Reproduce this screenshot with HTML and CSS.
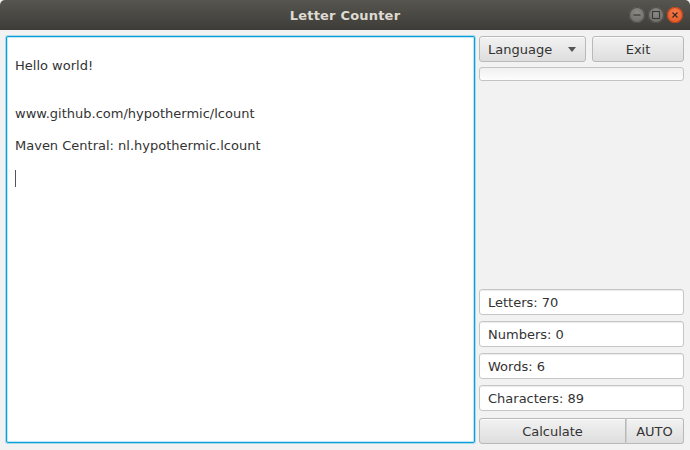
FILE: index.html
```html
<!DOCTYPE html>
<html>
<head>
<meta charset="utf-8">
<link rel="stylesheet" href="styles.css">
</head>
<body>
<div class="window">
  <div class="titlebar">
    <div class="title">Letter Counter</div>
    <div class="controls">
      <span class="wbtn min"><svg width="16" height="16" viewBox="0 0 16 16"><line x1="4.5" y1="8" x2="11.5" y2="8" stroke="#3a3935" stroke-width="1.2"/></svg></span>
      <span class="wbtn max"><svg width="16" height="16" viewBox="0 0 16 16"><rect x="4.5" y="4.5" width="7" height="7" fill="none" stroke="#3a3935" stroke-width="1.1"/></svg></span>
      <span class="wbtn close"><svg width="16" height="16" viewBox="0 0 16 16"><path d="M5.5 5.5 L10.5 10.5 M10.5 5.5 L5.5 10.5" stroke="#3a2a22" stroke-width="1.2"/></svg></span>
    </div>
  </div>
  <div class="content">
    <div class="editor">
      <div class="line">&nbsp;</div>
      <div class="line">Hello world!</div>
      <div class="line">&nbsp;</div>
      <div class="line">&nbsp;</div>
      <div class="line">www.github.com/hypothermic/lcount</div>
      <div class="line">&nbsp;</div>
      <div class="line">Maven Central: nl.hypothermic.lcount</div>
      <div class="line">&nbsp;</div>
      <div class="line"><span class="caret"></span></div>
    </div>
    <div class="side">
      <div class="toprow">
        <div class="btn lang"><span>Language</span><span class="arrow"></span></div>
        <div class="btn exit">Exit</div>
      </div>
      <div class="progress"></div>
      <div class="spacer"></div>
      <div class="field">Letters: 70</div>
      <div class="field">Numbers: 0</div>
      <div class="field">Words: 6</div>
      <div class="field last">Characters: 89</div>
      <div class="bottomrow">
        <div class="btn calc">Calculate</div>
        <div class="btn auto">AUTO</div>
      </div>
    </div>
  </div>
</div>
</body>
</html>
```
FILE: styles.css
```css
html, body {
  margin: 0;
  padding: 0;
}
body {
  width: 690px;
  height: 450px;
  overflow: hidden;
  background: #f2f2f2;
  font-family: "DejaVu Sans", sans-serif;
}
.window {
  display: flex;
  flex-direction: column;
  height: 450px;
}
.titlebar {
  height: 30px;
  flex: none;
  background: linear-gradient(#57554f, #3d3c38);
  border-radius: 5px 5px 0 0;
  display: flex;
  align-items: center;
  justify-content: center;
  position: relative;
}
.title {
  color: #dfdbd2;
  font-weight: bold;
  font-size: 13px;
  letter-spacing: 0.2px;
}
.controls {
  position: absolute;
  right: 7px;
  top: 7px;
  display: flex;
  gap: 3px;
}
.wbtn {
  width: 16px;
  height: 16px;
  border-radius: 50%;
  display: block;
}
.wbtn svg { display: block; }
.min, .max {
  background: radial-gradient(circle at 50% 35%, #8c8a85, #66645f);
  box-shadow: inset 0 0 0 1px #4f4d49;
}
.close {
  background: radial-gradient(circle at 50% 35%, #f77a4b, #e0521f);
  box-shadow: inset 0 0 0 1px #b6441a;
}
.content {
  flex: 1;
  display: grid;
  grid-template-columns: 469px 205px;
  column-gap: 4px;
  padding: 6px 6px 6px 6px;
  min-height: 0;
}
.editor {
  background: #fff;
  border: 1px solid #0a9fd8;
  box-shadow: 0 0 0 1px rgba(3, 158, 211, 0.3), inset 0 0 0 1px #bfe6f6;
  border-radius: 2px;
  padding: 5px 8px;
  font-size: 13px;
  line-height: 16px;
  color: #333;
  margin-bottom: 1px;
}
.line {
  white-space: pre;
  height: 16px;
}
.caret {
  display: inline-block;
  width: 1px;
  height: 17px;
  background: #555;
  vertical-align: -4px;
}
.side {
  display: flex;
  flex-direction: column;
  font-size: 13px;
  color: #333;
}
.toprow {
  display: flex;
  gap: 6px;
  height: 26px;
}
.btn {
  box-sizing: border-box;
  height: 26px;
  border: 1px solid #b9b9b9;
  border-radius: 3px;
  background: linear-gradient(#f2f2f2, #dedede);
  box-shadow: inset 0 1px 0 #fbfbfb;
  display: flex;
  align-items: center;
  justify-content: center;
  color: #333;
}
.lang {
  width: 107px;
  justify-content: space-between;
  padding: 0 9px 0 8px;
}
.arrow {
  width: 0;
  height: 0;
  border-left: 4.5px solid transparent;
  border-right: 4.5px solid transparent;
  border-top: 5px solid #555;
  margin-top: 1px;
}
.exit {
  flex: 1;
}
.progress {
  box-sizing: border-box;
  height: 14px;
  margin-top: 5px;
  border: 1px solid #c4c4c4;
  border-radius: 3px;
  background: linear-gradient(#f0f0f0, #fdfdfd);
}
.spacer {
  flex: 1;
}
.field {
  box-sizing: border-box;
  height: 26px;
  margin-bottom: 6px;
  border: 1px solid #c6c6c6;
  border-radius: 3px;
  background: #fff;
  box-shadow: inset 0 1px 1px #ececec;
  display: flex;
  align-items: center;
  padding-left: 8px;
}
.field.last { margin-bottom: 7px; }
.bottomrow {
  display: flex;
  height: 26px;
}
.calc {
  width: 147px;
  border-radius: 3px 0 0 3px;
}
.auto {
  flex: 1;
  border-left: none;
  border-radius: 0 3px 3px 0;
  box-shadow: inset 1px 0 0 #cfcfcf, inset 0 1px 0 #fbfbfb;
}
```
